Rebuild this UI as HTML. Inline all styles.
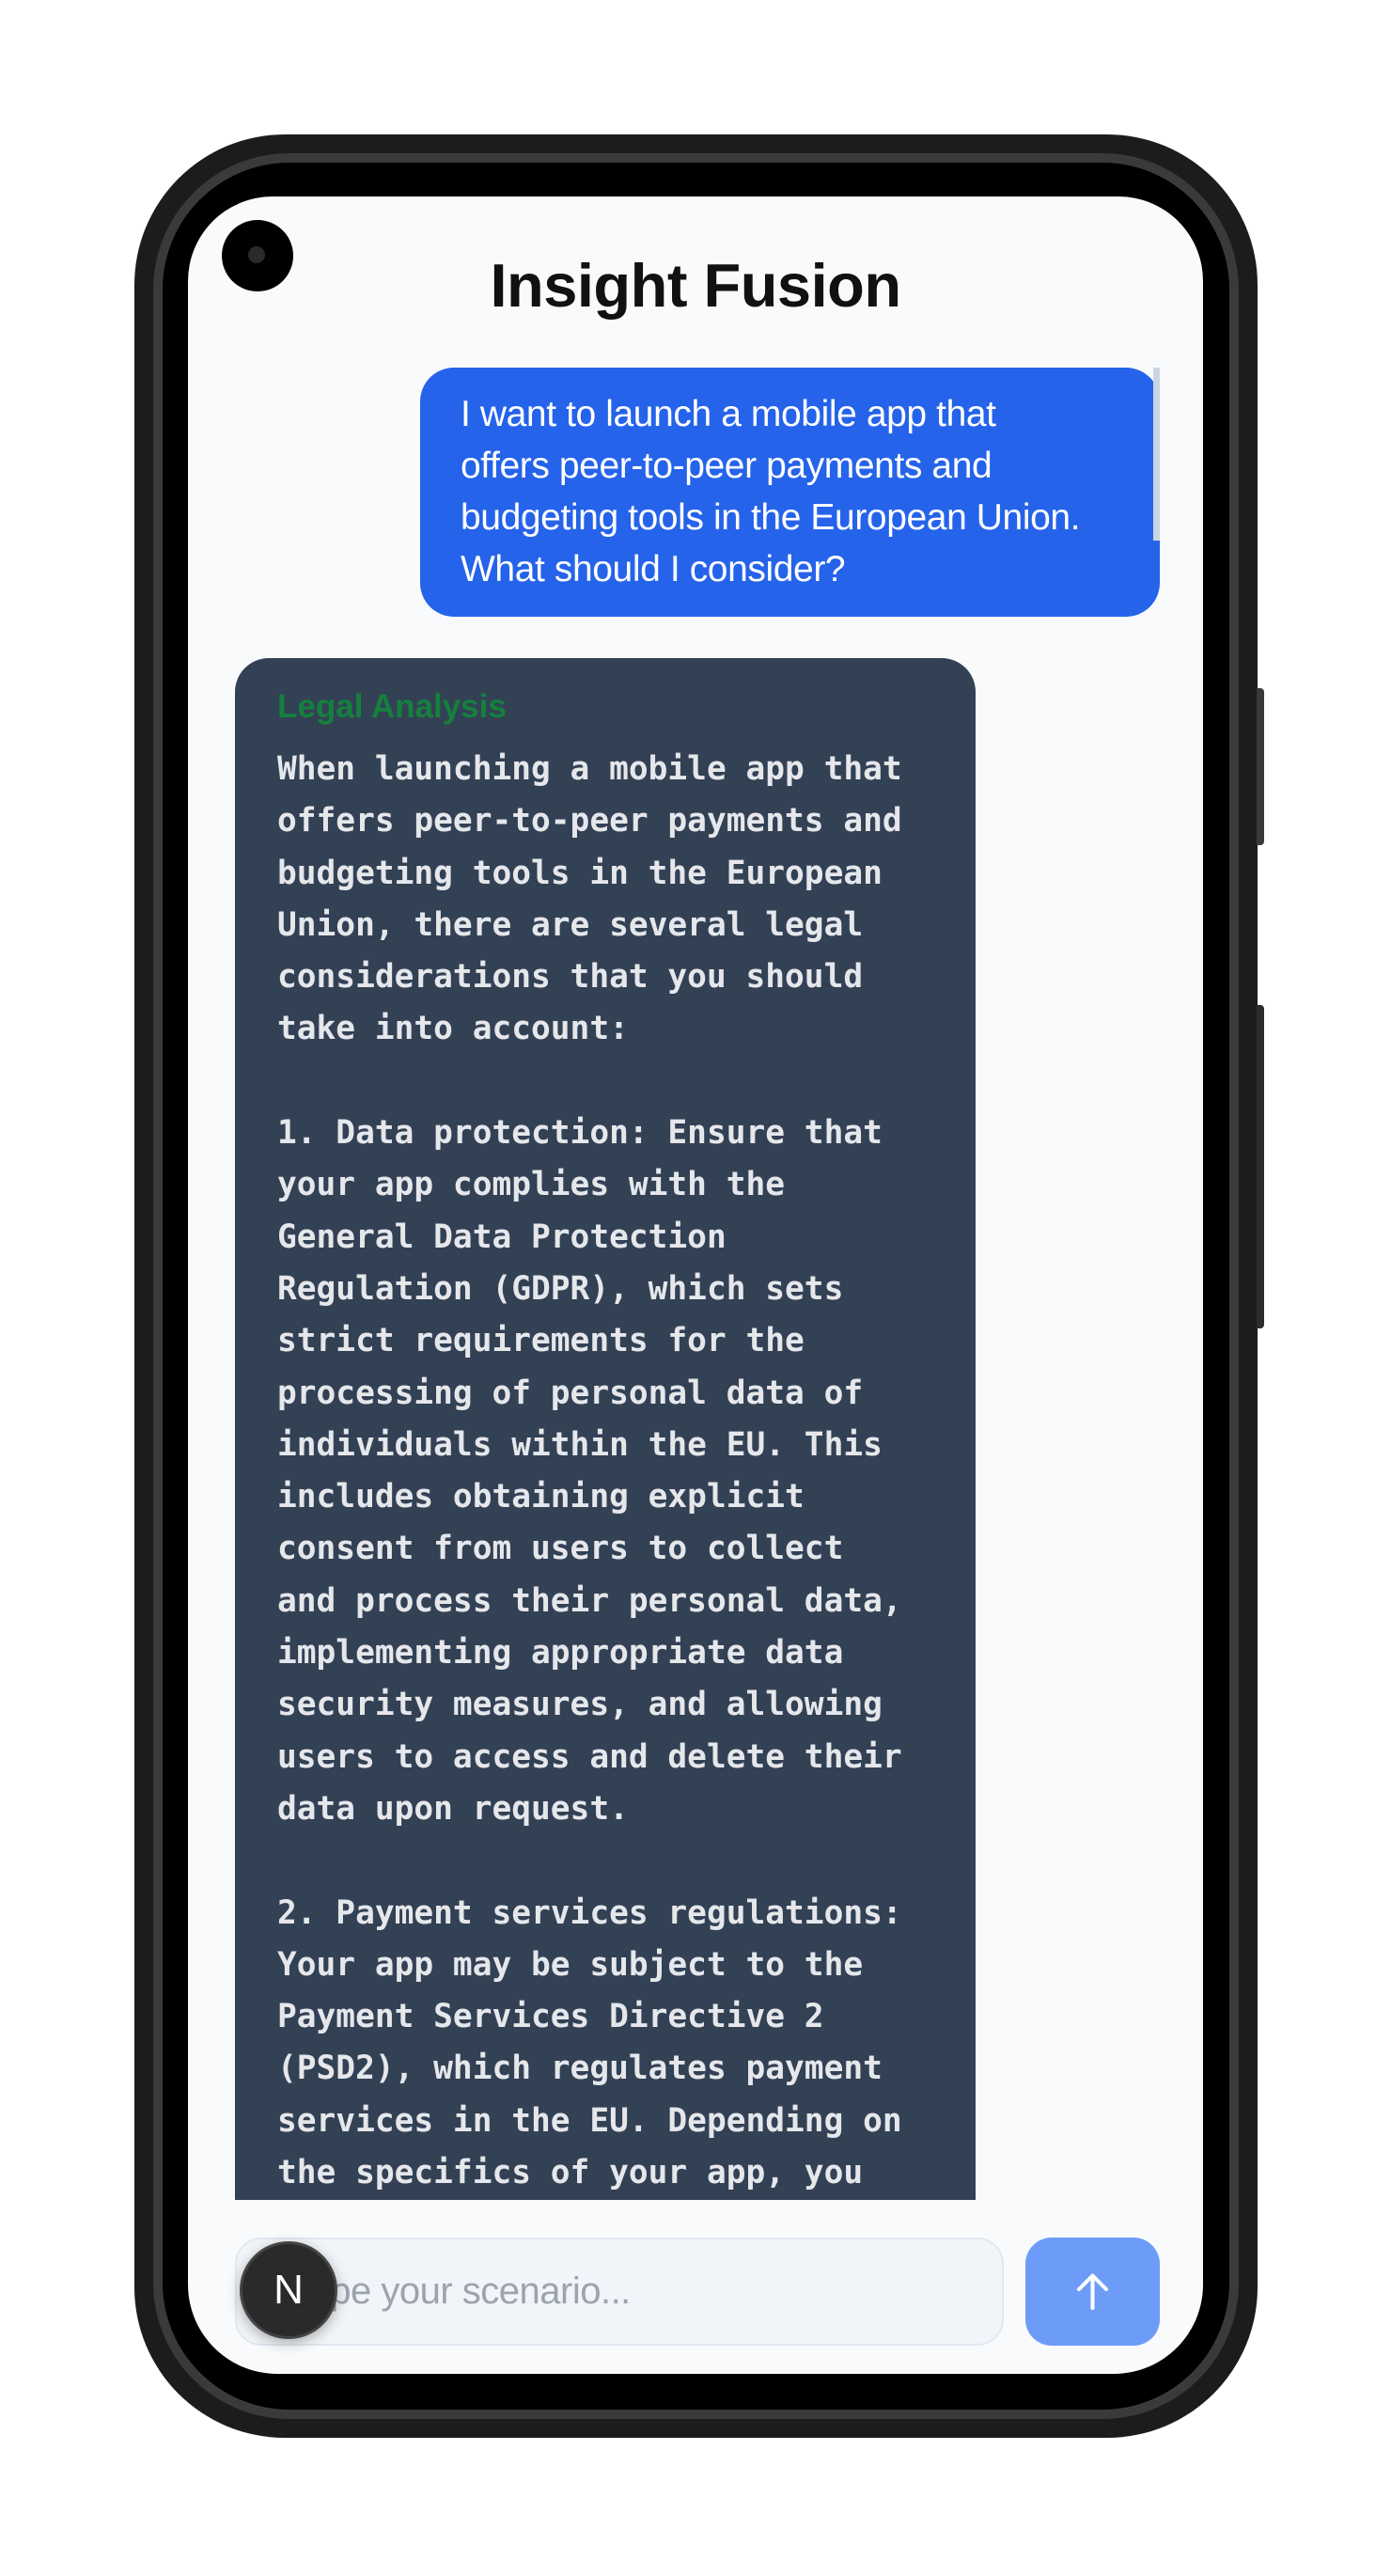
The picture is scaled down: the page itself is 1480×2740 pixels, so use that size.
<!DOCTYPE html>
<html><head><meta charset="utf-8"><style>
*{margin:0;padding:0;box-sizing:border-box}
body{width:1480px;height:2740px;background:#fff;position:relative;overflow:hidden;font-family:"Liberation Sans",sans-serif}
.outer{position:absolute;left:143px;top:143px;width:1195px;height:2450px;border-radius:160px;background:#1c1c1c}
.ring{position:absolute;left:163px;top:163px;width:1155px;height:2410px;border-radius:145px;border:10px solid #3a3a3a;background:#000}
.ring2{position:absolute;left:175px;top:175px;width:1131px;height:2386px;border-radius:130px;background:#000}
.screen{position:absolute;left:200px;top:209px;width:1080px;height:2316px;border-radius:90px 90px 95px 95px;background:#f8fafc;overflow:hidden}
.btn{position:absolute;left:1337px;width:8px;background:#3a3a3a;border-radius:0 4px 4px 0}
.cam{position:absolute;left:236px;top:234px;width:76px;height:76px;border-radius:50%;background:#000}
.cam i{position:absolute;left:28px;top:28px;width:18px;height:18px;border-radius:50%;background:#2a2a2a}
h1{position:absolute;left:0;width:1080px;top:57px;text-align:center;font-size:65px;font-weight:bold;color:#111;letter-spacing:-0.5px}
.user{position:absolute;left:247px;top:182px;width:787px;height:265px;background:#2563eb;border-radius:36px;color:#fff;font-size:39px;line-height:55px;padding:22px 20px 0 43px;letter-spacing:-0.4px;white-space:nowrap}
.sb{position:absolute;left:1027px;top:182px;width:7px;height:184px;background:#cbd5e1}
.ai{position:absolute;left:50px;top:491px;width:788px;height:1640px;background:#334155;border-radius:36px 36px 0 0;padding:32px 45px}
.ai .t{color:#15803d;font-size:35px;font-weight:bold;height:50px;line-height:40px}
.ai pre{font-family:"DejaVu Sans Mono",monospace;font-weight:bold;font-size:34.5px;line-height:55.3px;color:#e5e7eb;white-space:pre-wrap;margin-top:9px}
.inp{position:absolute;left:50px;top:2171px;width:818px;height:115px;background:#f1f5f9;border:2px solid #e2e8f0;border-radius:28px;font-size:40px;color:#9ca3af;line-height:111px;padding-left:58px;letter-spacing:-0.5px}
.send{position:absolute;left:891px;top:2171px;width:143px;height:115px;background:#6d9cf8;border-radius:28px}
.n{position:absolute;left:55px;top:2175px;width:104px;height:104px;border-radius:50%;background:#2a2a2a;border:3px solid #444;color:#fff;font-size:44px;text-align:center;line-height:98px;box-shadow:0 4px 14px rgba(0,0,0,.3)}
</style></head><body>
<div class="outer"></div><div class="ring"></div><div class="ring2"></div>
<div class="btn" style="top:732px;height:167px"></div>
<div class="btn" style="top:1069px;height:344px;background:#2c2c2c"></div>
<div class="screen">
<h1>Insight Fusion</h1>
<div class="user">I want to launch a mobile app that<br>offers peer-to-peer payments and<br>budgeting tools in the European Union.<br>What should I consider?</div>
<div class="sb"></div>
<div class="ai"><div class="t">Legal Analysis</div><pre>When launching a mobile app that
offers peer-to-peer payments and
budgeting tools in the European
Union, there are several legal
considerations that you should
take into account:

1. Data protection: Ensure that
your app complies with the
General Data Protection
Regulation (GDPR), which sets
strict requirements for the
processing of personal data of
individuals within the EU. This
includes obtaining explicit
consent from users to collect
and process their personal data,
implementing appropriate data
security measures, and allowing
users to access and delete their
data upon request.

2. Payment services regulations:
Your app may be subject to the
Payment Services Directive 2
(PSD2), which regulates payment
services in the EU. Depending on
the specifics of your app, you</pre></div>
<div class="inp">Type your scenario...</div>
<div class="send"><svg width="143" height="115" viewBox="0 0 143 115"><path d="M71.5 41v34M57 55l14.5-14.5L86 55" stroke="#fff" stroke-width="4" fill="none" stroke-linecap="round" stroke-linejoin="round"/></svg></div>
<div class="n">N</div>
</div>
<div class="cam"><i></i></div>
</body></html>
